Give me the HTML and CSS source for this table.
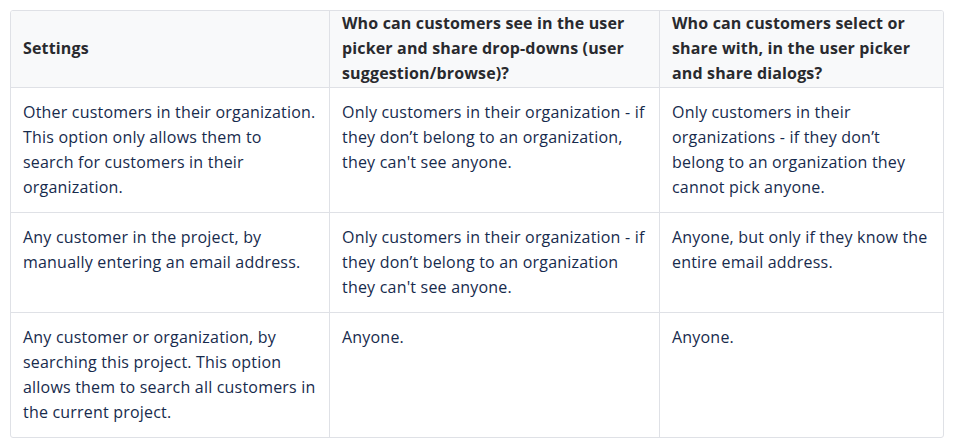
FILE: index.html
```html
<!DOCTYPE html>
<html lang="en">
<head>
<meta charset="utf-8">
<title>Customer permissions</title>
<link rel="stylesheet" href="styles.css">
</head>
<body>
<div class="page">
  <table class="perm-table">
    <colgroup>
      <col class="c1">
      <col class="c2">
      <col class="c3">
    </colgroup>
    <thead>
      <tr>
        <th>Settings</th>
        <th>Who can customers see in the user picker and share drop-downs (user suggestion/browse)?</th>
        <th>Who can customers select or share with, in the user picker and share dialogs?</th>
      </tr>
    </thead>
    <tbody>
      <tr>
        <td>Other customers in their organization. This option only allows them to search for customers in their organization.</td>
        <td>Only customers in their organization - if they don’t belong to an organization, they can't see anyone.</td>
        <td>Only customers in their organizations - if they don’t belong to an organization they cannot pick anyone.</td>
      </tr>
      <tr>
        <td>Any customer in the project, by manually entering an email address.</td>
        <td>Only customers in their organization - if they don’t belong to an organization they can't see anyone.</td>
        <td>Anyone, but only if they know the entire email address.</td>
      </tr>
      <tr>
        <td>Any customer or organization, by searching this project. This option allows them to search all customers in the current project.</td>
        <td>Anyone.</td>
        <td>Anyone.</td>
      </tr>
    </tbody>
  </table>
</div>
</body>
</html>
```
FILE: styles.css
```css
html, body {
  margin: 0;
  padding: 0;
  background: #ffffff;
}

.page {
  padding: 10px;
  font-family: "Open Sans", "Noto Sans", "Liberation Sans", sans-serif;
  font-size: 16px;
  letter-spacing: 0.2px;
  line-height: 25px;
  color: #172b4d;
}

.perm-table {
  width: 934px;
  table-layout: fixed;
  border-collapse: separate;
  border-spacing: 0;
  border: 1px solid #dfe1e6;
  border-radius: 3px;
  overflow: hidden;
}

.c1 { width: 319px; }
.c2 { width: 330px; }
.c3 { width: 283px; }

.perm-table th,
.perm-table td {
  text-align: left;
  border-right: 1px solid #dfe1e6;
  border-bottom: 1px solid #dfe1e6;
}

.perm-table th:last-child,
.perm-table td:last-child {
  border-right: 0;
}

.perm-table tbody tr:last-child td {
  border-bottom: 0;
}

.perm-table th {
  background: #f8f9fa;
  font-weight: 700;
  letter-spacing: 0.15px;
  color: #292a2e;
  vertical-align: middle;
  padding: 0 12px 1px 12px;
}

.perm-table td {
  vertical-align: top;
  padding: 12px 12px 12px 12px;
}

.perm-table td:first-child {
  padding-right: 13px;
}
```
